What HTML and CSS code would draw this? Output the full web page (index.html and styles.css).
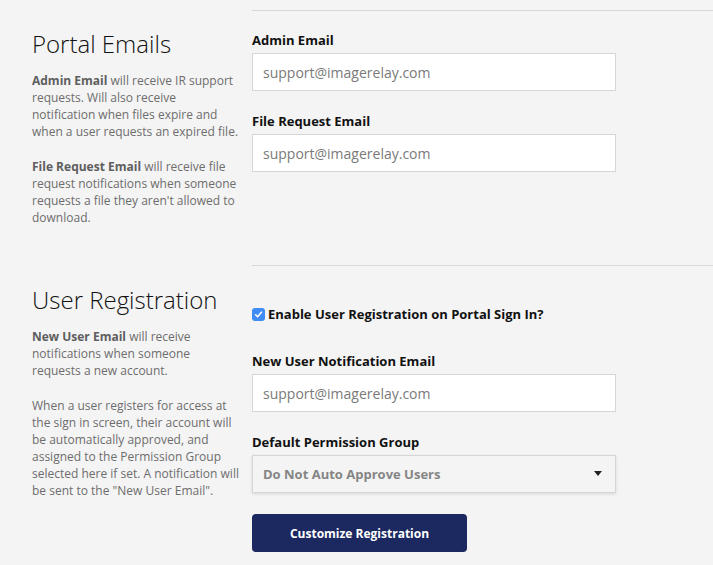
FILE: index.html
```html
<!DOCTYPE html>
<html>
<head>
<meta charset="utf-8">
<link rel="stylesheet" href="styles.css">
</head>
<body>
<div class="page">
  <section class="sec sec-portal">
    <div class="info">
      <h2 class="title">Portal Emails</h2>
      <p class="desc"><b>Admin Email</b> will receive IR support requests. Will also receive notification when files expire and when a user requests an expired file.</p>
      <p class="desc"><b>File Request Email</b> will receive file request notifications when someone requests a file they aren't allowed to download.</p>
    </div>
    <div class="form">
      <label class="lbl first">Admin Email</label>
      <div class="input">support@imagerelay.com</div>
      <label class="lbl">File Request Email</label>
      <div class="input">support@imagerelay.com</div>
    </div>
  </section>
  <section class="sec sec-reg">
    <div class="info">
      <h2 class="title">User Registration</h2>
      <p class="desc"><b>New User Email</b> will receive notifications when someone requests a new account.</p>
      <p class="desc">When a user registers for access at the sign in screen, their account will be automatically approved, and assigned to the Permission Group selected here if set. A notification will be sent to the "New User Email".</p>
    </div>
    <div class="form">
      <div class="check-row">
        <span class="check"><svg width="13" height="13" viewBox="0 0 13 13"><path d="M3.6 6.8 L5.6 8.8 L9.4 4.2" fill="none" stroke="#fff" stroke-width="1.6" stroke-linecap="round" stroke-linejoin="round"/></svg></span>
        <span class="lbl-inline">Enable User Registration on Portal Sign In?</span>
      </div>
      <label class="lbl">New User Notification Email</label>
      <div class="input">support@imagerelay.com</div>
      <label class="lbl">Default Permission Group</label>
      <div class="select"><span>Do Not Auto Approve Users</span><svg class="caret" width="8" height="5" viewBox="0 0 8 5"><path d="M0 0 H8 L4 5 Z" fill="#222"/></svg></div>
      <button class="btn">Customize Registration</button>
    </div>
  </section>
</div>
</body>
</html>
```

FILE: styles.css
```css
html, body {
  margin: 0;
  padding: 0;
  background: #f4f4f4;
}
body {
  font-family: "Open Sans", "Noto Sans", sans-serif;
  color: #111;
}
.page {
  padding-top: 10px;
}
.sec {
  display: grid;
  grid-template-columns: 252px 461px;
}
.sec-portal {
  height: 255px;
}
.info {
  padding-left: 32px;
  padding-right: 12px;
}
.sec-portal .info { padding-top: 19px; }
.sec-reg .info { padding-top: 20px; }
.title {
  margin: 0 0 13px;
  font-size: 24px;
  line-height: 30px;
  font-weight: 300;
  color: #111;
}
.desc {
  margin: 0 0 18px;
  font-size: 12px;
  line-height: 17px;
  color: #6d6d6d;
}
.desc b {
  font-weight: 700;
  color: #5e5e5e;
}
.form {
  border-top: 1px solid #d8d8d8;
  padding-top: 20px;
  display: flex;
  flex-direction: column;
  align-items: flex-start;
}
.lbl {
  display: block;
  font-size: 13px;
  line-height: 18px;
  font-weight: 700;
  color: #111;
  margin: 21px 0 4px;
}
.lbl.first { margin-top: 0; }
.input {
  box-sizing: border-box;
  width: 364px;
  height: 38px;
  background: #fff;
  border: 1px solid #d6d6d6;
  padding: 0 10px;
  font-size: 14px;
  line-height: 37px;
  color: #7a7a7a;
}
.check-row {
  display: flex;
  align-items: center;
  gap: 3px;
  margin-top: 19px;
  height: 18px;
}
.check {
  width: 13px;
  height: 13px;
  border-radius: 3px;
  background: #3f8cf4;
  display: block;
}
.check svg { display: block; }
.lbl-inline {
  font-size: 13px;
  font-weight: 700;
  line-height: 18px;
  color: #111;
}
.check-row + .lbl { margin-top: 29px; }
.select {
  box-sizing: border-box;
  width: 364px;
  height: 38px;
  background: #f4f4f4;
  border: 1px solid #d6d6d6;
  box-shadow: 0 1px 3px rgba(0,0,0,0.12);
  padding: 0 13px 0 10px;
  display: flex;
  align-items: center;
  justify-content: space-between;
  font-size: 13px;
  font-weight: 700;
  color: #858585;
}
.caret { display: block; margin-top: -2px; }
.btn {
  margin-top: 21px;
  width: 215px;
  height: 38px;
  border: none;
  border-radius: 4px;
  background: #1b2960;
  color: #fff;
  font-family: "Open Sans", "Noto Sans", sans-serif;
  font-size: 12px;
  font-weight: 700;
  padding: 0;
}
```
